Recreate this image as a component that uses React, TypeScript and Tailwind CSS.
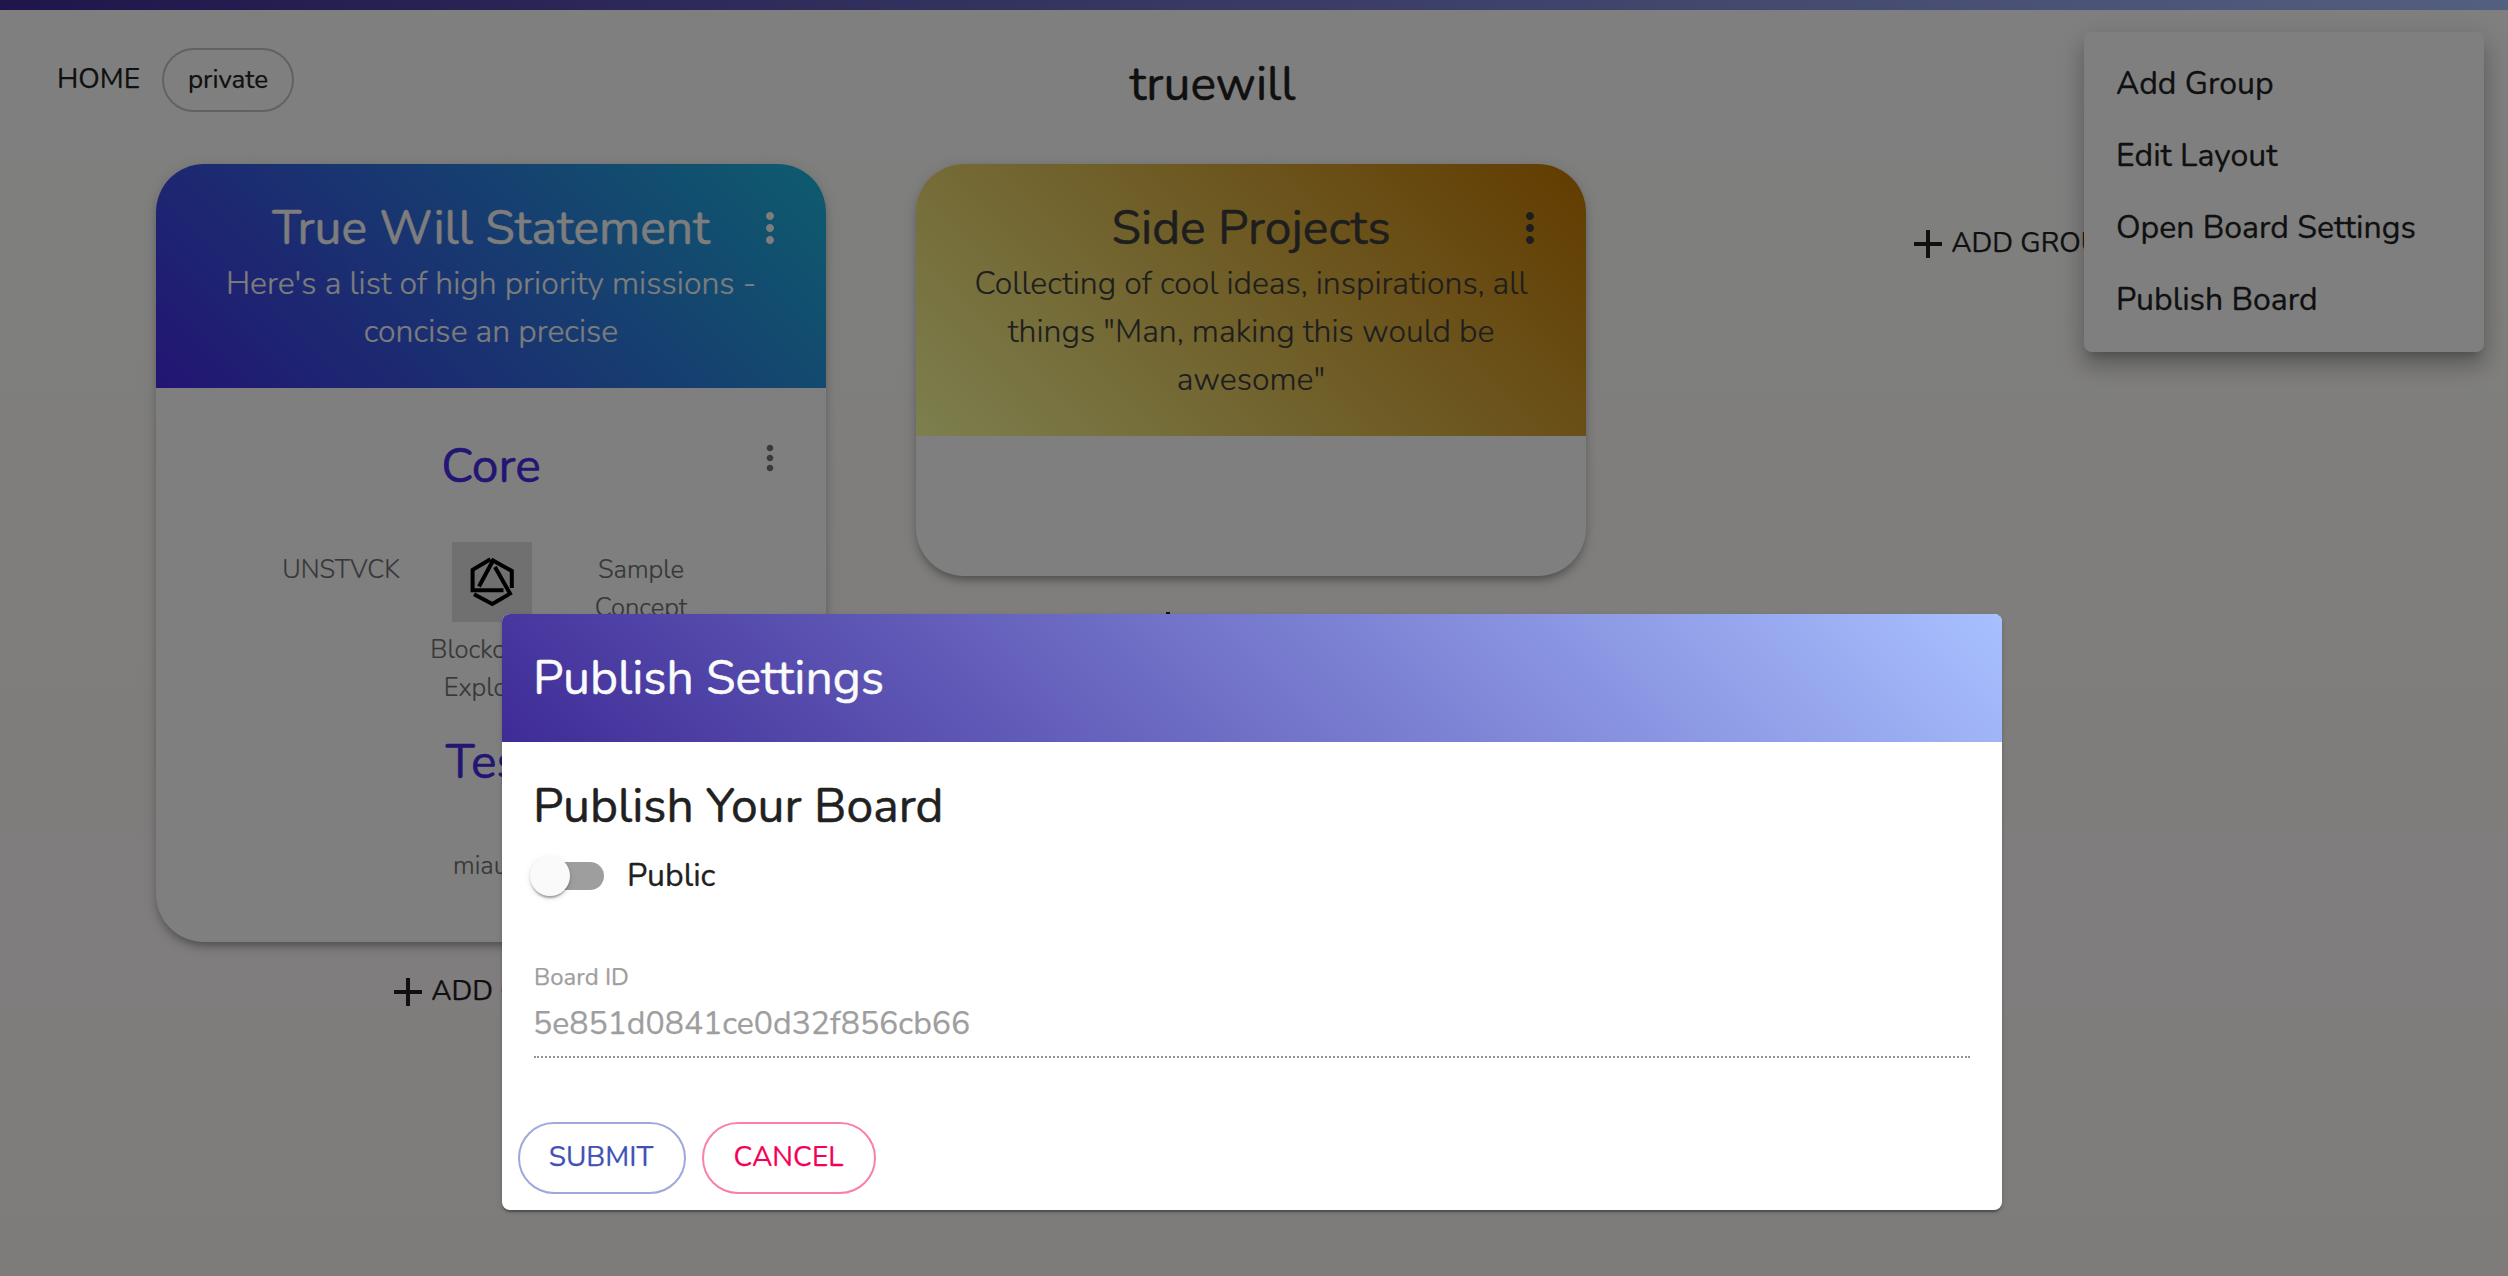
import type { ReactNode } from "react";

function MoreVert({ className }: { className: string }) {
  return (
    <svg viewBox="0 0 24 24" className={`shrink-0 ${className}`} fill="currentColor">
      <path d="M12 8c1.1 0 2-.9 2-2s-.9-2-2-2-2 .9-2 2 .9 2 2 2zm0 2c-1.1 0-2 .9-2 2s.9 2 2 2 2-.9 2-2-.9-2-2-2zm0 6c-1.1 0-2 .9-2 2s.9 2 2 2 2-.9 2-2-.9-2-2-2z" />
    </svg>
  );
}

function AddGroupButton({ className = "" }: { className?: string }) {
  return (
    <button className={`flex h-14 items-center text-[28px] leading-[49px] text-[#212121] [-webkit-text-stroke:0.25px] ${className}`}>
      <svg viewBox="0 0 24 24" className="ml-px size-12" fill="currentColor">
        <path d="M19 13h-6v6h-2v-6H5v-2h6V5h2v6h6v2z" />
      </svg>
      <span className="-mt-px -ml-px">ADD GROUP</span>
    </button>
  );
}

function HexLogo() {
  return (
    <svg viewBox="0 0 80 80" className="size-20" fill="none" stroke="#000" strokeWidth="4">
      <path d="M38.5 17.3 20.6 27.8V48.3H51.5" />
      <path d="M27 44.5 41 18.5 59.8 29V46" />
      <path d="M43 25 58 51.6 40.3 62 22 52.3" />
    </svg>
  );
}

function GroupCard({ header, title, lines, children }: { header: string; title: string; lines: string[]; children: ReactNode }) {
  return (
    <section className="w-[670px] overflow-hidden rounded-[48px] bg-white shadow-[0_6px_6px_-4px_rgba(0,0,0,0.2),0_6px_8px_0_rgba(0,0,0,0.14),0_2px_16px_0_rgba(0,0,0,0.12)]">
      <header className={`flex p-8 ${header}`}>
        <div className="w-12 shrink-0" />
        <div className="flex min-w-0 flex-1 flex-col items-center">
          <h2 className="text-5xl leading-[64px]">{title}</h2>
          {lines.map((l) => (
            <p key={l} className="text-[32px] leading-[48px] font-light whitespace-nowrap [-webkit-text-stroke:0.2px]">
              {l}
            </p>
          ))}
        </div>
        <MoreVert className="mt-2 size-12" />
      </header>
      {children}
    </section>
  );
}

const menu = ["Add Group", "Edit Layout", "Open Board Settings", "Publish Board"];

export default function App() {
  return (
    <div className="relative h-[1276px] w-[2508px] overflow-hidden bg-[linear-gradient(180deg,#ffffff_0%,#fffefc_25%,#fdfbf8_60%,#fffafc_74%,#fdfbf8_82%,#fcf9f5_100%)] font-['Nunito','Lato',sans-serif] text-[#212121] [-webkit-text-stroke:0.5px]">
      <div className="h-2.5 bg-[linear-gradient(45deg,#3f2b96,#a8c0ff)]" />

      <header className="grid h-[154px] grid-cols-[1fr_auto_1fr] items-start pr-[137px] pl-[54px]">
        <div className="flex items-center pt-[38px] pl-[3px] [-webkit-text-stroke:0.25px]">
          <a className="-mt-px text-[28px] leading-[49px]">HOME</a>
          <span className="ml-[22px] flex h-16 w-[132px] items-center justify-center rounded-full border-2 border-black/23 pb-px text-[26px]">
            private
          </span>
        </div>
        <h1 className="pt-[42px] text-5xl leading-[64px]">truewill</h1>
        <div />
      </header>

      <main className="flex items-start gap-[90px] pl-[156px]">
        <div className="flex flex-col items-center">
          <GroupCard
            header="bg-[linear-gradient(45deg,#452ae6,#1cb8dc)] text-[#fafafa]"
            title="True Will Statement"
            lines={["Here's a list of high priority missions -", "concise an precise"]}
          >
            <div className="h-[554px] pt-[46px]">
              <div className="flex px-9">
                <div className="w-10" />
                <h3 className="flex-1 text-center text-5xl leading-[64px] text-[#452ae6]">Core</h3>
                <MoreVert className="mt-1 size-10 text-black/54" />
              </div>
              <div className="mx-auto mt-11 grid h-[188px] w-[450px] grid-cols-3 text-center text-[25.6px] leading-[38.4px] font-light text-[#6e6e6e] [-webkit-text-stroke:0.2px]">
                <p className="pt-[9px]">UNSTVCK</p>
                <div className="flex flex-col items-center">
                  <div className="ml-0.5 size-20 bg-[#e0e0e0]">
                    <HexLogo />
                  </div>
                  <p className="pt-[9px]">
                    Blockchain
                    <br />
                    Explorer
                  </p>
                </div>
                <p className="pt-[9px]">
                  Sample
                  <br />
                  Concept
                </p>
              </div>
              <h3 className="text-center text-5xl leading-[64px] text-[#452ae6]">Test</h3>
              <p className="pt-[53px] pl-[297px] text-[25.6px] leading-[38.4px] font-light text-[#6e6e6e] [-webkit-text-stroke:0.2px]">
                miau
              </p>
            </div>
          </GroupCard>
          <AddGroupButton className="mt-[22px]" />
        </div>

        <div className="flex flex-col items-center">
          <GroupCard
            header="bg-[linear-gradient(45deg,#faff9e,#c47800)] text-[#3c3c3c]"
            title="Side Projects"
            lines={["Collecting of cool ideas, inspirations, all", 'things "Man, making this would be', 'awesome"']}
          >
            <div className="h-[140px]" />
          </GroupCard>
          <AddGroupButton className="mt-[22px]" />
        </div>

        <div className="flex w-[670px] shrink-0 justify-center pt-[52px]">
          <AddGroupButton />
        </div>
      </main>

      <ul className="absolute top-8 right-6 w-[400px] rounded-lg bg-white py-4 [-webkit-text-stroke:0.3px] shadow-[0_10px_10px_-6px_rgba(0,0,0,0.2),0_16px_20px_2px_rgba(0,0,0,0.14),0_6px_28px_4px_rgba(0,0,0,0.12)]">
        {menu.map((m) => (
          <li key={m} className="px-8 py-3 text-[32px] leading-[48px]">
            {m}
          </li>
        ))}
      </ul>

      <div className="absolute inset-0 flex justify-center bg-black/50 pt-[614px] pr-1">
        <section className="h-[596px] w-[1500px] rounded-lg bg-white shadow-[0_4px_2px_-2px_rgba(0,0,0,0.2),0_2px_2px_0_rgba(0,0,0,0.14),0_2px_6px_0_rgba(0,0,0,0.12)]">
          <header className="rounded-t-lg bg-[linear-gradient(45deg,#3f2b96,#a8c0ff)] py-8 pr-8 pl-[31px] text-5xl leading-[64px] text-[#fafafa]">
            Publish Settings
          </header>
          <div className="h-[364px] px-8 pt-8">
            <h2 className="-ml-px text-5xl leading-[64px]">Publish Your Board</h2>
            <label className="mt-3.5 flex h-12 items-center text-[32px] leading-[48px] [-webkit-text-stroke:0.3px]">
              <span className="-ml-1 flex h-10 w-[74px] items-center">
                <span className="z-10 size-10 shrink-0 rounded-full bg-[#fafafa] shadow-[0_4px_2px_-2px_rgba(0,0,0,0.2),0_2px_2px_0_rgba(0,0,0,0.14),0_2px_6px_0_rgba(0,0,0,0.12)]" />
                <span className="-ml-[34px] h-7 w-[68px] shrink-0 rounded-full bg-[#9e9e9e]" />
              </span>
              <span className="ml-[23px]">Public</span>
            </label>
            <div className="mt-[65px] text-[#9e9e9e] [-webkit-text-stroke:0.25px]">
              <p className="text-2xl leading-6">Board ID</p>
              <p className="mt-4 -ml-px text-[32px] leading-[38px]">5e851d0841ce0d32f856cb66</p>
            </div>
            <div className="mt-[13px] border-b-2 border-dotted border-black/42" />
          </div>
          <footer className="mt-4 flex gap-4 px-4 text-[28px] [-webkit-text-stroke:0.25px]">
            <button className="flex h-18 w-[168px] justify-center rounded-full border-2 border-[#3f51b5]/50 pt-[9px] pr-0.5 leading-[49px] text-[#3f51b5]">
              SUBMIT
            </button>
            <button className="flex h-18 w-[174px] justify-center rounded-full border-2 border-[#f50057]/50 pt-[9px] pr-px leading-[49px] text-[#f50057]">
              CANCEL
            </button>
          </footer>
        </section>
      </div>
    </div>
  );
}
